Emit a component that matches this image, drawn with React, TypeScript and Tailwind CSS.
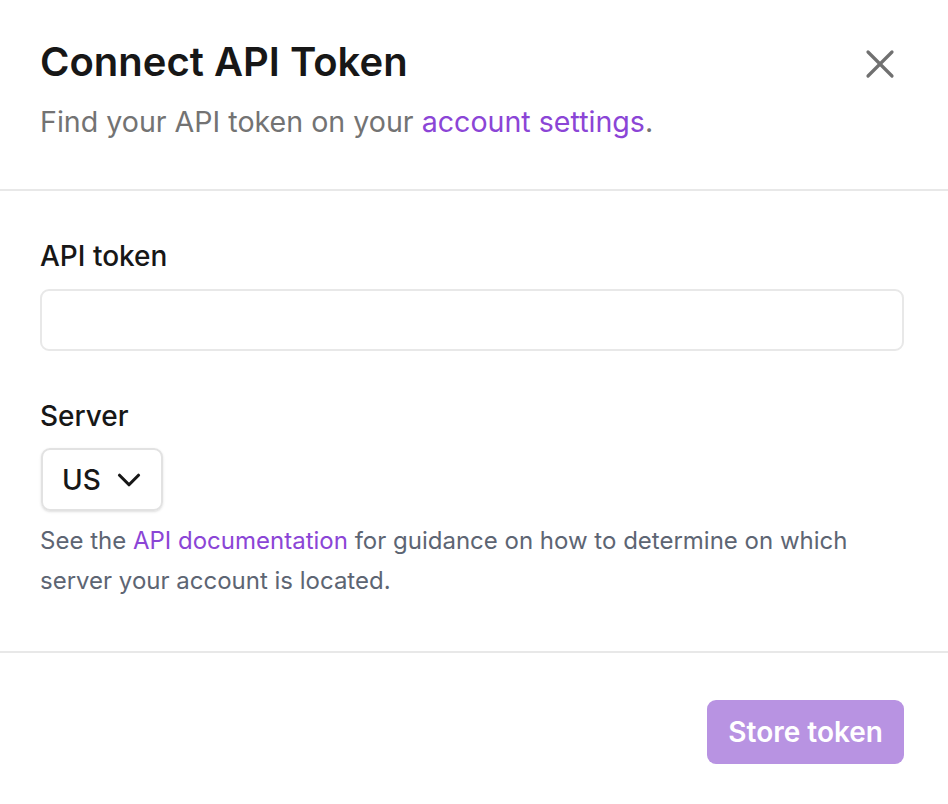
import { X, ChevronDown } from "lucide-react"

const App = () => {
  return (
    <div className="w-[948px] h-[804px] bg-white text-[#171717] font-['Inter',_sans-serif] overflow-hidden">
      {/* HEADER */}
      <div className="flex flex-row items-start justify-between pl-10 pr-[44px] pt-[38px] pb-[49px] border-b-2 border-[#e8e8e8]">
        <div className="flex flex-col gap-[18px]">
          <p className="text-[40px] leading-[48px] font-semibold">Connect API Token</p>
          <p className="text-[28.6px] leading-[36px] text-[#737373]">
            Find your API token on your <a className="text-[#8b45d6]">account settings</a>.
          </p>
        </div>
        <button className="mt-[2px] text-[#707070]">
          <X size={48} strokeWidth={1.6} />
        </button>
      </div>

      {/* BODY */}
      <div className="pl-10 pr-[44px] pt-[47px] pb-[50px] border-b-2 border-[#e8e8e8] flex flex-col">
        <label className="text-[28px] leading-[36px] font-medium">API token</label>
        <input className="mt-[15px] h-[62px] w-full rounded-[9px] border-2 border-[#e8e8e8] px-5 text-[26px] outline-none" />

        <label className="mt-[47px] text-[28px] leading-[36px] font-medium">Server</label>
        <div className="mt-[14px] ml-px w-fit h-[63px] flex flex-row items-center gap-[9px] pl-[19px] pr-[13px] rounded-[9px] border-2 border-[#e2e2e2] shadow-sm text-[28px] font-medium">
          US <ChevronDown size={38} strokeWidth={2} />
        </div>

        <p className="mt-[10px] text-[24px] leading-[40px] text-[#5d6573]">
          See the <a className="text-[#8b45d6]">API documentation</a> for guidance on how to determine on which server your account is located.
        </p>
      </div>

      {/* FOOTER */}
      <div className="flex flex-row justify-end pr-[44px] pt-[47px]">
        <button className="h-[64px] px-[21px] rounded-[9px] bg-[#b893e2] text-white text-[28px] font-semibold">
          Store token
        </button>
      </div>
    </div>
  )
}

export default App
